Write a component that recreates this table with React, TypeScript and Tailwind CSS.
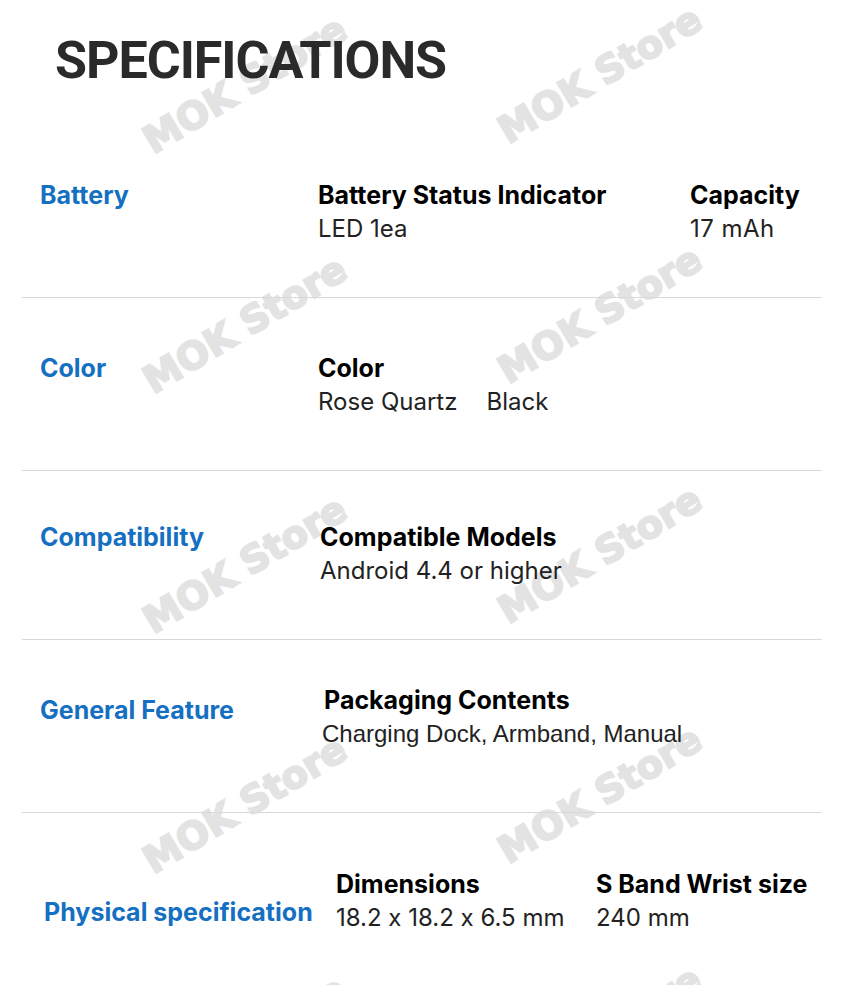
const marks = [
    "left-[245px] top-[85px]",
    "left-[600px] top-[75px]",
    "left-[245px] top-[325px]",
    "left-[600px] top-[315px]",
    "left-[245px] top-[565px]",
    "left-[600px] top-[555px]",
    "left-[245px] top-[805px]",
    "left-[600px] top-[795px]",
    "left-[245px] top-[1045px]",
    "left-[600px] top-[1035px]",
];

function Spec({ title, values, className = "", valueClass = "" }: { title: string; values: string[]; className?: string; valueClass?: string }) {
    return (
        <div className={className}>
            <div className="text-[25px] leading-[34px] font-bold text-black">{title}</div>
            <div className={`flex gap-[29px] text-[24px] leading-[34px] text-[#222] ${valueClass}`}>
                {values.map((v) => (
                    <span key={v}>{v}</span>
                ))}
            </div>
        </div>
    );
}

function Label({ text, className = "" }: { text: string; className?: string }) {
    return (
        <div className={`text-[25px] leading-[34px] font-bold text-[#1570c2] ${className}`}>
            {text}
        </div>
    );
}

export default function App() {
    return (
        <div
            className="relative w-[850px] h-[985px] overflow-hidden bg-white [font-feature-settings:'calt'_0]"
            style={{ fontFamily: "Inter, 'Open Sans', sans-serif" }}
        >
            {marks.map((m) => (
                <div
                    key={m}
                    className={`absolute ${m} -translate-x-1/2 -translate-y-1/2 -rotate-[31deg] whitespace-nowrap text-[38px] font-bold text-[#e3e3e3] [-webkit-text-stroke:2px_#e3e3e3] select-none`}
                    style={{ fontFamily: "'DejaVu Sans', sans-serif" }}
                >
                    MOK Store
                </div>
            ))}

            <div className="relative">
                <div className="h-[129px] pt-[30px] pl-[55px]">
                    <h1 className="text-[52px] leading-[62px] font-bold tracking-[-0.02em] text-[#2a2a2a]" style={{ fontFamily: "Roboto, sans-serif" }}>
                        SPECIFICATIONS
                    </h1>
                </div>

                <div className="mx-[22px] w-[800px]">
                    <div className="flex h-[169px] pt-[49px] border-b border-[#d8d8d8]">
                        <Label text="Battery" className="ml-[18px] w-[278px]" />
                        <Spec title="Battery Status Indicator" values={["LED 1ea"]} className="w-[372px]" />
                        <Spec title="Capacity" values={["17 mAh"]} valueClass="tracking-[0.02em]" />
                    </div>

                    <div className="flex h-[173px] pt-[53px] border-b border-[#d8d8d8]">
                        <Label text="Color" className="ml-[18px] w-[278px]" />
                        <Spec title="Color" values={["Rose Quartz", "Black"]} />
                    </div>

                    <div className="flex h-[169px] pt-[49px] border-b border-[#d8d8d8]">
                        <Label text="Compatibility" className="ml-[18px] w-[280px]" />
                        <Spec title="Compatible Models" values={["Android 4.4 or higher"]} />
                    </div>

                    <div className="flex h-[173px] pt-[43px] border-b border-[#d8d8d8]">
                        <Label text="General Feature" className="ml-[18px] mt-[10px] w-[284px]" />
                        <Spec
                            title="Packaging Contents"
                            values={["Charging Dock, Armband, Manual"]}
                            valueClass="-ml-[2px] text-[#111]"
                            className="[&>div:last-child]:font-['Liberation_Sans',sans-serif]"
                        />
                    </div>

                    <div className="flex pt-[54px]">
                        <Label text="Physical specification" className="ml-[22px] mt-[28px] w-[292px]" />
                        <Spec title="Dimensions" values={["18.2 x 18.2 x 6.5 mm"]} className="w-[260px]" />
                        <Spec title="S Band Wrist size" values={["240 mm"]} />
                    </div>
                </div>
            </div>
        </div>
    );
}
